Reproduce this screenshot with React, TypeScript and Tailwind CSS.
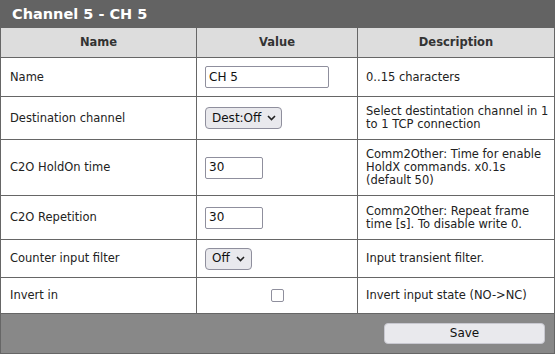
import React from "react";

const font = { fontFamily: '"DejaVu Sans", Verdana, sans-serif' };

function Chevron() {
  return (
    <svg width="9" height="6" viewBox="0 0 9 6" className="ml-[6px]">
      <path d="M1 1l3.5 3.5L8 1" fill="none" stroke="#222" strokeWidth="1.6" />
    </svg>
  );
}

function Select({ value, w }: { value: string; w: string }) {
  return (
    <div
      className={`${w} h-[22px] flex items-center pl-[6px] rounded-[4px] border border-[#8f8f9d] bg-[#e9e9ed] text-[12px] text-[#111]`}
    >
      <span>{value}</span>
      <Chevron />
    </div>
  );
}

function TextBox({ value, w }: { value: string; w: string }) {
  return (
    <div
      className={`${w} h-[22px] flex items-center pl-[3px] rounded-[2px] border border-[#8f8f9d] bg-white text-[12px] text-[#111]`}
    >
      {value}
    </div>
  );
}

type Row = { label: string; h: string; value: React.ReactNode; desc: React.ReactNode; center?: boolean };

const rows: Row[] = [
  { label: "Name", h: "h-[39px]", value: <TextBox value="CH 5" w="w-[124px]" />, desc: "0..15 characters" },
  {
    label: "Destination channel",
    h: "h-[43px]",
    value: <Select value="Dest:Off" w="w-[77px]" />,
    desc: (
      <>
        Select destintation channel in 1<br />to 1 TCP connection
      </>
    ),
  },
  {
    label: "C2O HoldOn time",
    h: "h-[56px]",
    value: <TextBox value="30" w="w-[58px]" />,
    desc: (
      <>
        Comm2Other: Time for enable<br />HoldX commands. x0.1s<br />(default 50)
      </>
    ),
  },
  {
    label: "C2O Repetition",
    h: "h-[44px]",
    value: <TextBox value="30" w="w-[58px]" />,
    desc: (
      <>
        Comm2Other: Repeat frame<br />time [s]. To disable write 0.
      </>
    ),
  },
  { label: "Counter input filter", h: "h-[38px]", value: <Select value="Off" w="w-[47px]" />, desc: "Input transient filter." },
  {
    label: "Invert in",
    h: "h-[36px]",
    center: true,
    value: <div className="w-[13px] h-[13px] rounded-[2px] border border-[#8f8f9d] bg-white" />,
    desc: "Invert input state (NO->NC)",
  },
];

export default function App() {
  return (
    <div className="w-[555px] h-[354px] bg-white text-[11.5px] text-[#222] leading-[13px]" style={font}>
      <div className="h-[28px] bg-[#636363] flex items-center pl-[12px] text-white font-bold text-[14.5px]">
        Channel 5 - CH 5
      </div>
      <div className="border-x border-[#666]">
        <div className="grid grid-cols-[195px_161px_1fr] h-[30px] bg-[#dddddd] border-b border-[#666] font-bold text-[#333]">
          <div className="flex items-center justify-center">Name</div>
          <div className="flex items-center justify-center border-l border-[#666]">Value</div>
          <div className="flex items-center justify-center border-l border-[#666]">Description</div>
        </div>
        {rows.map((r) => (
          <div key={r.label} className={`grid grid-cols-[195px_161px_1fr] ${r.h} border-b border-[#666]`}>
            <div className="flex items-center pl-[9px]">{r.label}</div>
            <div className={`flex items-center border-l border-[#666] ${r.center ? "justify-center" : "pl-[8px]"}`}>
              {r.value}
            </div>
            <div className="flex items-center border-l border-[#666] pl-[8px]">
              <div>{r.desc}</div>
            </div>
          </div>
        ))}
      </div>
      <div className="h-[40px] bg-[#888888] border-x border-b border-[#666] flex items-center justify-end pr-[9px]">
        <div className="w-[161px] h-[21px] rounded-[4px] border border-[#c8c8d0] bg-[#e9e9ed] flex items-center justify-center text-[12px] text-[#111]">
          Save
        </div>
      </div>
    </div>
  );
}
